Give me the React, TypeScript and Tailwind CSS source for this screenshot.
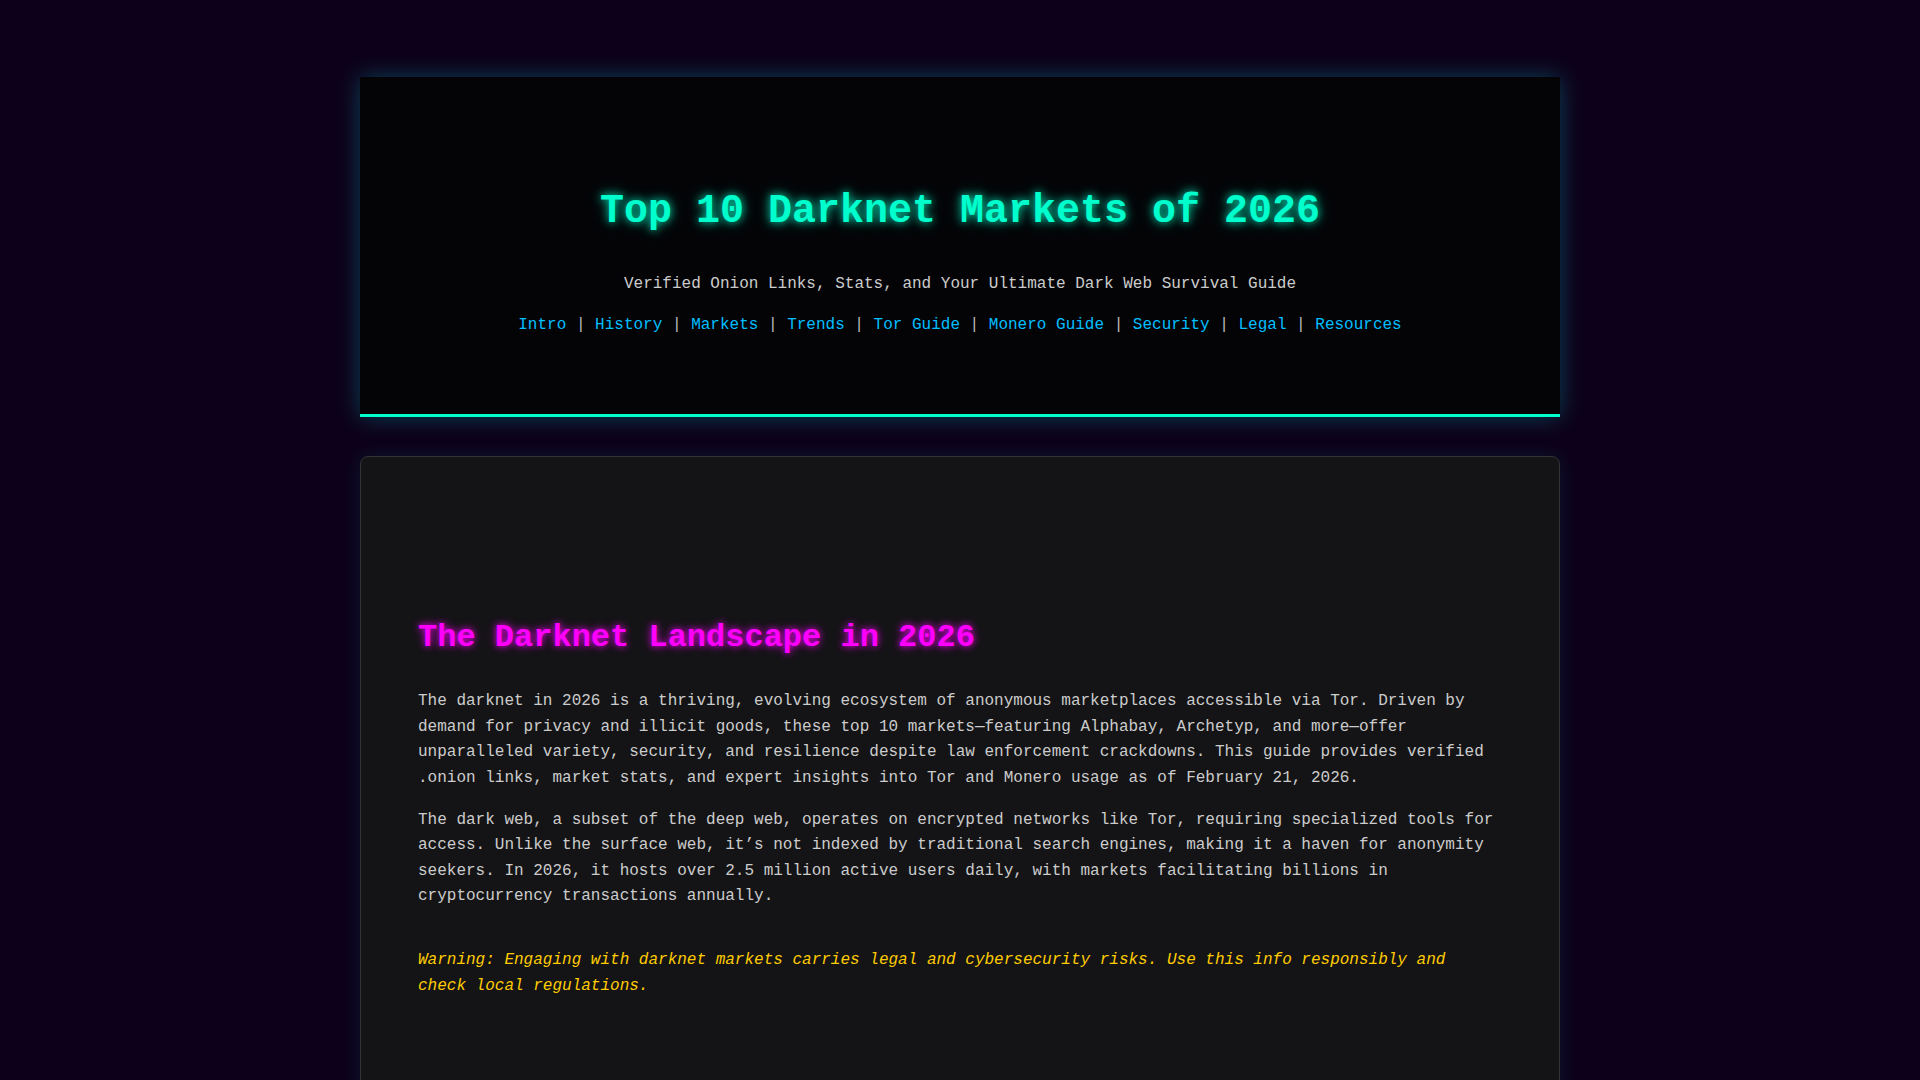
import React from "react";

const navLinks = [
    "Intro",
    "History",
    "Markets",
    "Trends",
    "Tor Guide",
    "Monero Guide",
    "Security",
    "Legal",
    "Resources",
];

export default function App() {
    return (
        <div className="min-h-screen w-full bg-[#0d001a] pt-[77px] pb-10 font-['Liberation_Mono','DejaVu_Sans_Mono',monospace] text-[#cccccc]">
            <div className="mx-auto w-[1200px]">
                {/* Cabeçalho */}
                <header className="bg-[#040407] border-b-[3px] border-[#00ffcc] pt-[112px] pb-[76px] text-center shadow-[0_0_22px_rgba(0,220,220,0.3)]">
                    <h1 className="text-[40px] leading-[46px] font-bold text-[#00ffcc] [text-shadow:0_0_8px_rgba(0,255,204,0.8),0_0_16px_rgba(0,255,204,0.4)]">
                        Top 10 Darknet Markets of 2026
                    </h1>
                    <p className="mt-[37px] text-base leading-[1.6] text-[#cccccc]">
                        Verified Onion Links, Stats, and Your Ultimate Dark Web Survival Guide
                    </p>
                    <nav className="mt-[15px] text-base leading-[1.6] whitespace-pre text-[#bbbbbb]">
                        {navLinks.map((link, i) => (
                            <span key={link}>
                                {i > 0 && " | "}
                                <a href={`#${link.toLowerCase().replace(" ", "-")}`} className="text-[#00bfff]">
                                    {link}
                                </a>
                            </span>
                        ))}
                    </nav>
                </header>

                {/* Intro */}
                <section
                    id="intro"
                    className="mt-[39px] rounded-lg border border-[#333338] bg-[#141416] px-[57px] pt-[162px] pb-[160px] shadow-[0_0_18px_rgba(0,200,220,0.12)]"
                >
                    <h2 className="mb-8 text-[32px] leading-[38px] font-bold text-[#ff00ff] [text-shadow:0_0_6px_rgba(255,0,255,0.8),0_0_12px_rgba(255,0,255,0.4)]">
                        The Darknet Landscape in 2026
                    </h2>
                    <p className="text-base leading-[1.6] text-[#cccccc]">
                        The darknet in 2026 is a thriving, evolving ecosystem of anonymous marketplaces accessible via Tor. Driven by demand for privacy and illicit goods, these top 10 markets—featuring Alphabay, Archetyp, and more—offer unparalleled variety, security, and resilience despite law enforcement crackdowns. This guide provides verified .onion links, market stats, and expert insights into Tor and Monero usage as of February 21, 2026.
                    </p>
                    <p className="mt-4 text-base leading-[1.6] text-[#cccccc]">
                        The dark web, a subset of the deep web, operates on encrypted networks like Tor, requiring specialized tools for access. Unlike the surface web, it’s not indexed by traditional search engines, making it a haven for anonymity seekers. In 2026, it hosts over 2.5 million active users daily, with markets facilitating billions in cryptocurrency transactions annually.
                    </p>
                    <p className="mt-[38px] text-base leading-[1.6] italic text-[#ffcc00]">
                        Warning: Engaging with darknet markets carries legal and cybersecurity risks. Use this info responsibly and check local regulations.
                    </p>
                </section>
            </div>
        </div>
    );
}
